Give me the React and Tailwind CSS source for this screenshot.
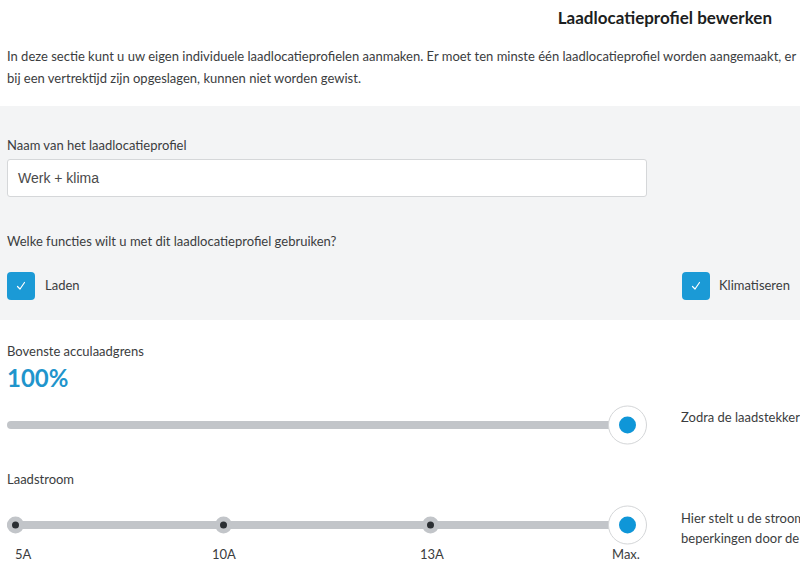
import React from "react";

const font = { fontFamily: "Lato, 'Liberation Sans', sans-serif" };

function Check() {
  return (
    <div className="w-[28px] h-[28px] shrink-0 rounded-[4px] bg-[#1b9ad6] flex items-center justify-center">
      <svg width="10" height="10" viewBox="0 0 10 10" fill="none">
        <path d="M1.5 5.5 L4 8 L8.5 1.5" stroke="white" strokeWidth="1.2" strokeLinecap="round" strokeLinejoin="round" />
      </svg>
    </div>
  );
}

function Thumb() {
  return (
    <div className="absolute w-[39px] h-[39px] rounded-full bg-white border border-[#d4d6d8] flex items-center justify-center left-[601px] top-1/2 -translate-y-1/2">
      <div className="w-[17px] h-[17px] rounded-full bg-[#0f96d8]" />
    </div>
  );
}

function Tick({ left }) {
  return (
    <div
      className="absolute w-[17px] h-[17px] rounded-full bg-[#c2c5c9] flex items-center justify-center top-1/2 -translate-y-1/2"
      style={{ left }}
    >
      <div className="w-[7px] h-[7px] rounded-full bg-[#2b2f33]" />
    </div>
  );
}

export default function App() {
  return (
    <div className="w-[800px] h-[570px] overflow-hidden bg-white text-[#3b3d40]" style={font}>
      <div className="flex justify-end pr-[28px] pt-[7px] h-[34px]">
        <h1 className="text-[17px] font-bold text-[#1c1e21] leading-[22px]">Laadlocatieprofiel bewerken</h1>
      </div>
      <p className="px-[7px] pt-[11px] text-[13px] leading-[22px] whitespace-nowrap h-[72px]">
        In deze sectie kunt u uw eigen individuele laadlocatieprofielen aanmaken. Er moet ten minste één laadlocatieprofiel worden aangemaakt, er
        <br />
        bij een vertrektijd zijn opgeslagen, kunnen niet worden gewist.
      </p>
      <div className="bg-[#f3f4f5] h-[214px] px-[7px] pt-[29px]">
        <div className="text-[13px] leading-[20px]">Naam van het laadlocatieprofiel</div>
        <div className="mt-[4px] w-[640px] h-[38px] bg-white border border-[#d5d7d9] rounded-[3px] flex items-center px-[10px] text-[14px] text-[#4a4a4a]" style={{ fontFamily: "'Liberation Sans', Arial, sans-serif" }}>
          Werk + klima
        </div>
        <div className="mt-[34px] text-[13px] leading-[20px]">Welke functies wilt u met dit laadlocatieprofiel gebruiken?</div>
        <div className="mt-[21px] flex items-center">
          <div className="flex items-center gap-[10px] w-[675px] shrink-0">
            <Check />
            <span className="text-[13px]">Laden</span>
          </div>
          <div className="flex items-center gap-[9px]">
            <Check />
            <span className="text-[13px]">Klimatiseren</span>
          </div>
        </div>
      </div>
      <div className="px-[7px] pt-[21px]">
        <div className="text-[13px] leading-[20px]">Bovenste acculaadgrens</div>
        <div className="text-[24px] font-bold text-[#1f95cc] leading-[28px] mt-[3px]">100%</div>
        <div className="flex items-center mt-[13px] h-[40px]">
          <div className="relative w-[640px] shrink-0 h-[40px] flex items-center">
            <div className="w-[620px] h-[8px] rounded-full bg-[#c2c5c9]" />
            <Thumb />
          </div>
          <div className="ml-[34px] text-[13px] leading-[20px] whitespace-nowrap -mt-[16px]">Zodra de laadstekker</div>
        </div>
        <div className="text-[13px] leading-[20px] mt-[24px]">Laadstroom</div>
        <div className="flex mt-[16px]">
          <div className="w-[640px] shrink-0">
            <div className="relative w-[640px] h-[40px] flex items-center">
              <div className="w-[620px] h-[8px] rounded-full bg-[#c2c5c9]" />
              <Tick left="0px" />
              <Tick left="208px" />
              <Tick left="415px" />
              <Thumb />
            </div>
            <div className="relative h-[20px] text-[13px] leading-[20px] -mt-[1px]">
              <span className="absolute left-[8px]">5A</span>
              <span className="absolute left-[205px]">10A</span>
              <span className="absolute left-[413px]">13A</span>
              <span className="absolute left-[605px]">Max.</span>
            </div>
          </div>
          <div className="ml-[34px] text-[13px] leading-[20px] whitespace-nowrap pt-[3px]">
            Hier stelt u de stroom
            <br />
            beperkingen door de
          </div>
        </div>
      </div>
    </div>
  );
}
